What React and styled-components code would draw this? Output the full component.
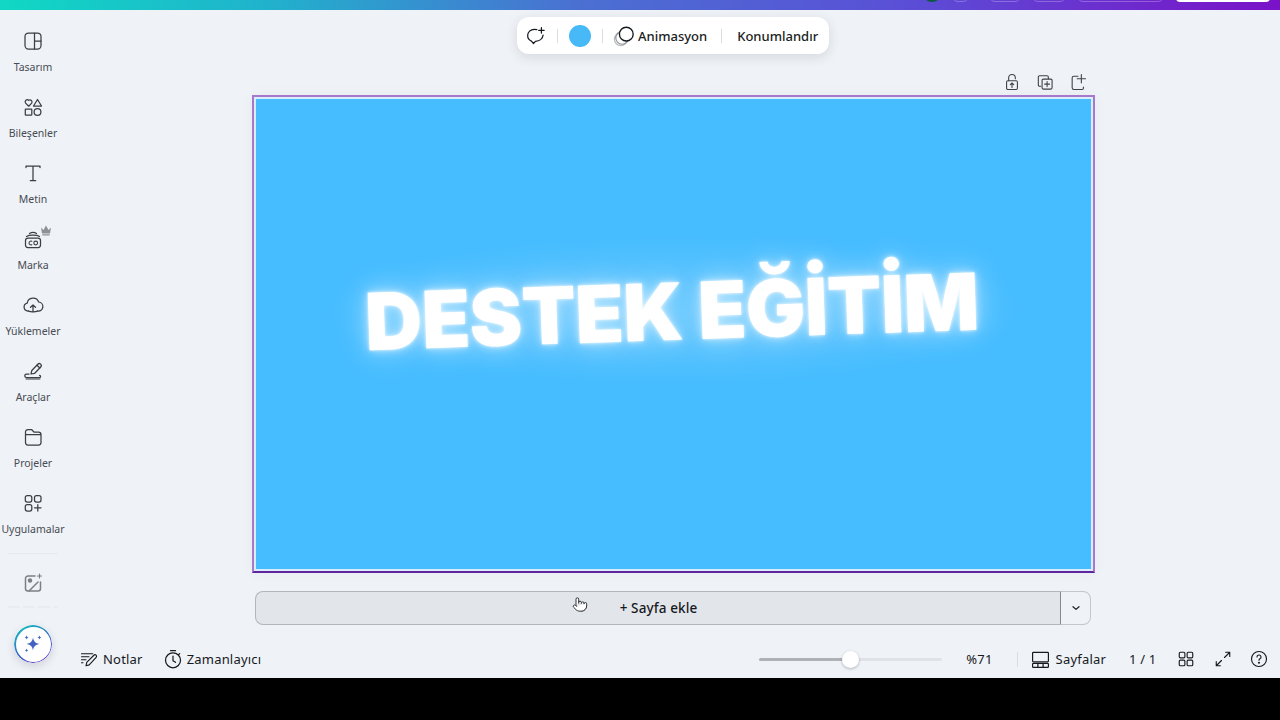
import React from 'react';
import styled, { createGlobalStyle } from 'styled-components';
import { Pointer } from 'lucide-react';

const Global = createGlobalStyle`
  html, body { margin: 0; padding: 0; background: #000; }
  body { font-family: "Noto Sans", "Open Sans", sans-serif; color: #0e1318; }
  * { box-sizing: border-box; }
`;
const Page = styled.div`
  width: 1280px; height: 720px; display: flex; flex-direction: column; overflow: hidden; background: #000;
`;
const TopBar = styled.header`
  height: 10px; flex: none; display: flex; justify-content: flex-end; align-items: flex-start; overflow: hidden;
  padding-right: 10px;
  background: linear-gradient(90deg, #10d8c4 0%, #1fb4cc 20%, #4a70d2 45%, #5a50d6 70%, #7a12c8 100%);
`;
const TopChip = styled.div`
  width: ${p => p.$w}px; height: ${p => p.$h || 12}px; margin-top: ${p => p.$top}px; margin-left: ${p => p.$gap}px;
  border-radius: ${p => p.$r || 6}px;
  border: ${p => (p.$fill ? 'none' : '1px solid rgba(255,255,255,.25)')};
  background: ${p => p.$fill || 'transparent'};
  flex: none;
`;
const Workspace = styled.div`
  height: 668px; flex: none; display: flex; background: #eff2f6;
`;
const Rail = styled.nav`
  width: 66px; flex: none; display: flex; flex-direction: column; align-items: center; padding-top: 19px;
`;
const RailItem = styled.div`
  width: 66px; height: 66px; flex: none; display: flex; flex-direction: column; align-items: center; position: relative;
  svg.main { width: 24px; height: 24px; color: #3a3f46; }
`;
const RailLabel = styled.span`
  font-size: 10.5px; line-height: 14px; margin-top: 7px; color: #474c54; white-space: nowrap;
`;
const Crown = styled.svg`
  position: absolute; top: -3px; left: 40px; width: 12px; height: 12px; color: #8e9298;
`;
const RailRule = styled.div`
  width: 50px; height: 1px; background: #e6e9ed; margin-top: -4px; flex: none;
`;
const FadedItem = styled.div`
  width: 66px; flex: none; display: flex; justify-content: center; margin-top: 17px; color: #7c8087;
  svg { width: 24px; height: 24px; }
`;
const FadedLabel = styled.div`
  width: 50px; height: 2px; margin-top: 11px; flex: none;
  background: repeating-linear-gradient(90deg, #e9ecf0 0 12px, transparent 12px 15px);
`;
const Assistant = styled.div`
  width: 38px; height: 38px; flex: none; margin-top: 17px; border-radius: 50%; background: #fff;
  display: flex; align-items: center; justify-content: center; position: relative;
  box-shadow: 0 3px 8px rgba(40,50,80,.16);
  &::before {
    content: ""; position: absolute; inset: 0; border-radius: 50%; padding: 1.5px;
    background: linear-gradient(150deg, #12c8c0, #3a60c8 60%, #6a20c8);
    -webkit-mask: linear-gradient(#000 0 0) content-box, linear-gradient(#000 0 0);
    -webkit-mask-composite: xor; mask-composite: exclude;
  }
  svg { width: 22px; height: 22px; color: #4162c0; }
`;
const Main = styled.main`
  flex: 1; min-width: 0; display: flex; flex-direction: column; align-items: center; padding-top: 7px;
`;
const Toolbar = styled.div`
  width: 312px; height: 37px; flex: none; background: #fff; border-radius: 12px; display: flex; align-items: center;
  padding-left: 9px; box-shadow: 0 3px 12px rgba(50,60,80,.14);
`;
const ToolIcon = styled.svg`
  width: ${p => p.$s}px; height: ${p => p.$s}px; flex: none; color: #16191e;
`;
const ToolSep = styled.div`
  width: 1px; height: 14px; background: #d9dce0; flex: none; margin: 0 ${p => p.$r}px 0 ${p => p.$l}px;
`;
const Swatch = styled.div`
  width: 22px; height: 22px; border-radius: 50%; background: #46b9f6; flex: none;
`;
const ToolText = styled.span`
  font-size: 13px; font-weight: 500; color: #1a1d22; white-space: nowrap; margin-left: ${p => p.$l || 0}px;
`;
const PageActions = styled.div`
  width: 836px; height: 24px; margin-top: 16px; flex: none; display: flex; justify-content: flex-end; gap: 13px; padding-right: 3px;
  svg { width: 20px; height: 20px; color: #3e4248; margin-top: 2px; }
`;
const Canvas = styled.div`
  width: 843px; height: 478px; margin-top: 1px; flex: none; padding: 2px;
  border: 2px solid #a878cc; border-bottom-color: #5f259e;
  background: #d9eefb; display: flex; box-shadow: 0 0 14px rgba(40,50,70,.04);
`;
const Artboard = styled.div`
  flex: 1; background: radial-gradient(ellipse 350px 75px at 50% 45%, #5dc5fe 0%, #52c1fe 60%, #46bdff 100%);
  display: flex; align-items: center; justify-content: center;
`;
const Headline = styled.h1`
  margin: 0 0 46px -3px; font-family: Inter, "Noto Sans", sans-serif; font-weight: 900; font-size: 79px; line-height: 1;
  letter-spacing: -0.5px; color: #fff; white-space: nowrap; transform: rotate(-1.9deg);
  text-shadow: 0 0 3px rgba(255,255,255,.9), 0 0 10px rgba(255,255,255,.6), 0 0 24px rgba(255,255,255,.4), 0 0 40px rgba(255,255,255,.25);
`;
const AddRow = styled.div`
  width: 836px; height: 34px; margin-top: 18px; flex: none; display: flex;
`;
const AddButton = styled.div`
  flex: 1; position: relative; display: flex; align-items: center; justify-content: center;
  background: #e2e5e9; border: 1px solid #b3b6ba; border-right: 0; border-radius: 8px 0 0 8px;
  font-size: 13.5px; font-weight: 500; letter-spacing: .12px; color: #16191e; padding-left: 1px;
`;
const Cursor = styled.div`
  position: absolute; left: 316px; top: 4px; color: #25282c; display: flex;
  svg { width: 16px; height: 17px; fill: #fff; }
`;
const AddMenu = styled.div`
  width: 31px; flex: none; display: flex; align-items: center; justify-content: center;
  border: 1px solid #c3c6ca; border-left: 1px solid #85888c; border-radius: 0 8px 8px 0; background: #eff2f6;
  svg { width: 10px; height: 10px; color: #1a1d22; }
`;
const Footer = styled.div`
  width: 100%; height: 38px; margin-top: 15px; flex: none; display: flex; align-items: center; padding-left: 14px;
`;
const FootIcon = styled.svg`
  width: ${p => p.$w || 18}px; height: ${p => p.$h || 18}px; flex: none; color: #16191e; margin-left: ${p => p.$l || 0}px;
`;
const FootText = styled.span`
  font-size: 13px; letter-spacing: .2px; color: #16191e; white-space: nowrap; margin-left: ${p => p.$l || 0}px;
`;
const Slider = styled.div`
  width: 183px; height: 3px; border-radius: 2px; flex: none; position: relative; margin-left: 498px;
  background: linear-gradient(90deg, #aeb1b5 50%, #dfe2e6 50%);
`;
const Thumb = styled.div`
  position: absolute; left: 83px; top: -7px; width: 17px; height: 17px; border-radius: 50%; background: #fff;
  box-shadow: 0 1px 3px rgba(30,40,60,.3);
`;
const FootSep = styled.div`
  width: 1px; height: 15px; background: #d9dce0; flex: none; margin-left: 24px;
`;

const svgProps = { viewBox: '0 0 24 24', fill: 'none', stroke: 'currentColor', strokeWidth: 1.5, strokeLinecap: 'round', strokeLinejoin: 'round' };

const icons = {
  design: <><rect x="4" y="4" width="16" height="16" rx="3.5" /><path d="M13.5 4v16M13.5 12H20" /></>,
  elements: <><path d="M7.7 11.2 4.6 8.1a2.1 2.1 0 0 1 3.1-2.8 2.1 2.1 0 0 1 3 2.8z" /><path d="M16.5 4.5 20.5 11h-8z" /><rect x="4.3" y="14" width="6.5" height="6" rx=".6" /><circle cx="16.5" cy="17" r="3.4" /></>,
  text: <path d="M5 6.5V5h14v1.500M12 5v14.500M9.300 19.500h5.400" />,
  brand: <><path d="M4.500 13.500C4.500 12 5.500 11 7 11h10c1.500 0 2.500 1 2.500 2.500v4.500c0 1.500-1 2.500-2.500 2.500H7c-1.500 0-2.500-1-2.500-2.500z" /><path d="M5.500 9.500C8 7.800 16 7.800 18.500 9.500M8.500 6.500c2-1.200 5-1.200 7 0" /><path d="M10.800 14.300a1.900 1.900 0 1 0 0 3.400" strokeWidth="1.100" /><circle cx="14.700" cy="16" r="1.900" strokeWidth="1.100" /></>,
  upload: <><path d="M7.500 18H7a4 4 0 0 1-.8-7.900A6 6 0 0 1 17.700 9a4.500 4.500 0 0 1-.7 9h-.5" /><path d="M12 18.500V12M9.500 14.300 12 12l2.500 2.300" /><path d="M7.500 18c1.500 1 7.500 1 9 0" /></>,
  tools: <><path d="m10 15 .8-3.500 6-6.300a2 2 0 0 1 2.900 2.800l-6 6.300z" /><path d="M16 6.200l2.800 2.800" /><path d="M8 15H5.500a1.500 1.500 0 0 0 0 3.500h13a1.100 1.100 0 0 0 0-2.200" /><path d="M5 20h14" strokeWidth="1" /></>,
  folder: <path d="M4.500 8V7a2.500 2.500 0 0 1 2.500-2.500h3.500L13 7h4.500A2.500 2.500 0 0 1 20 9.500v8a2.500 2.500 0 0 1-2.500 2.500H7A2.500 2.500 0 0 1 4.500 17.500V8zM4.500 9.500H20" />,
  apps: <><rect x="4.300" y="4.500" width="6.500" height="6.500" rx="2" /><rect x="13.500" y="4.500" width="6.500" height="6.500" rx="2" /><rect x="4.300" y="13.500" width="6.500" height="6.500" rx="2" /><path d="M16.800 13.500v6.500M13.500 16.800H20" /></>,
};

const railItems = [
  ['design', 'Tasarım'], ['elements', 'Bileşenler'], ['text', 'Metin'], ['brand', 'Marka', true],
  ['upload', 'Yüklemeler'], ['tools', 'Araçlar'], ['folder', 'Projeler'], ['apps', 'Uygulamalar'],
];

export default function App() {
  return (
    <Page>
      <Global />
      <TopBar>
        <TopChip $w={20} $h={20} $top={-18} $r={10} $fill="#0c5a3e" $gap={0} />
        <TopChip $w={17} $top={-10} $gap={10} />
        <TopChip $w={32} $top={-10} $gap={20} />
        <TopChip $w={34} $top={-10} $gap={11} />
        <TopChip $w={87} $top={-10} $gap={11} />
        <TopChip $w={94} $h={12} $top={-10} $r={4} $fill="#fff" $gap={12} />
      </TopBar>
      <Workspace>
        <Rail>
          {railItems.map(([icon, label, crown]) => (
            <RailItem key={label}>
              <svg className="main" {...svgProps} strokeWidth="1.25">{icons[icon]}</svg>
              {crown && <Crown viewBox="0 0 12 12"><path fill="currentColor" d="M1 3.500 3.500 6 6 1.500 8.500 6 11 3.500 10 9.500H2zM2.300 10.300h7.400V11.500H2.300z" /></Crown>}
              <RailLabel>{label}</RailLabel>
            </RailItem>
          ))}
          <RailRule />
          <FadedItem>
            <svg {...svgProps}>
              <path d="M14 5H7a2.500 2.500 0 0 0-2.500 2.500v10A2.500 2.500 0 0 0 7 20h10a2.500 2.500 0 0 0 2.500-2.500V11" />
              <circle cx="9" cy="9.500" r="1.500" fill="currentColor" />
              <path d="M8 20 17 11" />
              <path d="M18.500 3v4M16.500 5h4" strokeWidth="1.200" />
            </svg>
          </FadedItem>
          <FadedLabel />
          <Assistant>
            <svg viewBox="0 0 24 24" fill="currentColor">
              <path d="M12 5c.7 4.300 2.700 6.300 7 7-4.300.7-6.300 2.700-7 7-.7-4.300-2.700-6.300-7-7 4.300-.7 6.300-2.700 7-7z" />
              <path d="M5 2.500c.3 1.500.9 2.100 2.300 2.300-1.400.3-2 .9-2.300 2.300-.3-1.400-.9-2-2.300-2.300C4.100 4.600 4.700 4 5 2.500zM19 2.500c.3 1.500.9 2.100 2.300 2.300-1.400.3-2 .9-2.300 2.300-.3-1.400-.9-2-2.300-2.300 1.400-.2 2-.8 2.300-2.300zM5 17c.3 1.300.8 1.800 2 2-1.200.3-1.700.8-2 2-.3-1.200-.8-1.700-2-2 1.200-.2 1.700-.7 2-2z" />
            </svg>
          </Assistant>
        </Rail>
        <Main>
          <Toolbar>
            <ToolIcon {...svgProps} $s={20}>
              <path d="M13 4.300C12 4 11 4 10 4 5.500 4 2 7.300 2 11.500c0 3 1.800 5.500 4.500 6.700l2.500 2.800 2.300-2.600c4.700-.1 8.700-3 9.200-7.400" />
              <path d="M18.500 2v6.500M15.200 5.200h6.600" />
            </ToolIcon>
            <ToolSep $l={11} $r={11} />
            <Swatch />
            <ToolSep $l={11} $r={10} />
            <ToolIcon viewBox="0 0 24 24" fill="none" strokeWidth="1.300" $s={22}>
              <circle cx="8.500" cy="15.500" r="7" stroke="#b9bcc1" />
              <circle cx="10" cy="14" r="7" stroke="#8e9197" />
              <circle cx="14.500" cy="10" r="7.500" stroke="#16191e" fill="#fff" strokeWidth="1.500" />
            </ToolIcon>
            <ToolText $l={3}>Animasyon</ToolText>
            <ToolSep $l={14} $r={15} />
            <ToolText>Konumlandır</ToolText>
          </Toolbar>
          <PageActions>
            <svg {...svgProps} strokeWidth="1.300">
              <rect x="5.500" y="10.500" width="13" height="10.500" rx="1.500" />
              <path d="M8 10.500V7a4 4 0 0 1 8 0v1" />
              <path d="M12 18.500v-5M10 15.200l2-2 2 2" />
            </svg>
            <svg {...svgProps} strokeWidth="1.300">
              <path d="M7 17H5.500A1.500 1.500 0 0 1 4 15.500V6a1.500 1.500 0 0 1 1.500-1.500h9A1.500 1.500 0 0 1 16 6v2" />
              <rect x="8.500" y="8.500" width="12" height="12" rx="1.500" />
              <path d="M14.500 11.500v6M11.500 14.500h6" />
            </svg>
            <svg {...svgProps} strokeWidth="1.300">
              <path d="M12 5H7a2 2 0 0 0-2 2v12a2 2 0 0 0 2 2h10a1.500 1.500 0 0 0 1.500-1.500V18" />
              <path d="M16 3v10M11 8h10" />
            </svg>
          </PageActions>
          <Canvas>
            <Artboard>
              <Headline>DESTEK EĞİTİM</Headline>
            </Artboard>
          </Canvas>
          <AddRow>
            <AddButton>
              <Cursor><Pointer strokeWidth={1.4} /></Cursor>
              <span>+ Sayfa ekle</span>
            </AddButton>
            <AddMenu>
              <svg viewBox="0 0 10 10" fill="none" stroke="currentColor" strokeWidth="1.200" strokeLinecap="round" strokeLinejoin="round"><path d="m2 3.700 3 2.700 3-2.700" /></svg>
            </AddMenu>
          </AddRow>
          <Footer>
            <FootIcon {...svgProps} $w={18} $h={18}>
              <path d="M2 5h15M2 9h10M2 13h6M2 17h2" />
              <path d="m8 21 1-4.500L18.500 7a2 2 0 0 1 3 2.800L12.300 19.800z" />
            </FootIcon>
            <FootText $l={5}>Notlar</FootText>
            <FootIcon {...svgProps} $w={20} $h={20} $l={20}>
              <circle cx="12" cy="13.500" r="9" />
              <path d="M9 2h6M12 8.500v5.500l3 2M20 5.500 18.500 7" />
            </FootIcon>
            <FootText $l={4}>Zamanlayıcı</FootText>
            <Slider><Thumb /></Slider>
            <FootText $l={24}>%71</FootText>
            <FootSep />
            <FootIcon viewBox="0 0 24 24" fill="none" stroke="currentColor" strokeWidth="1.500" $w={19} $h={19} $l={13}>
              <rect x="2" y="3" width="20" height="12" rx="1" />
              <rect x="2" y="17" width="20" height="5" rx="1" />
              <path d="M8.700 17v5M15.300 17v5" />
            </FootIcon>
            <FootText $l={6}>Sayfalar</FootText>
            <FootText $l={23}>1 / 1</FootText>
            <FootIcon {...svgProps} $l={20}>
              <rect x="3" y="3" width="7.500" height="7.500" rx="1.500" />
              <rect x="13.500" y="3" width="7.500" height="7.500" rx="1.500" />
              <rect x="3" y="13.500" width="7.500" height="7.500" rx="1.500" />
              <rect x="13.500" y="13.500" width="7.500" height="7.500" rx="1.500" />
            </FootIcon>
            <FootIcon {...svgProps} $l={19}>
              <path d="M14 10 21 3M15.500 3H21v5.500M10 14l-7 7M3 15.500V21h5.500" />
            </FootIcon>
            <FootIcon {...svgProps} $l={18}>
              <circle cx="12" cy="12" r="10" />
              <path d="M9.300 9.300a2.700 2.700 0 1 1 4 2.400c-.9.500-1.300 1-1.300 2" />
              <circle cx="12" cy="17" r=".6" fill="currentColor" />
            </FootIcon>
          </Footer>
        </Main>
      </Workspace>
    </Page>
  );
}
